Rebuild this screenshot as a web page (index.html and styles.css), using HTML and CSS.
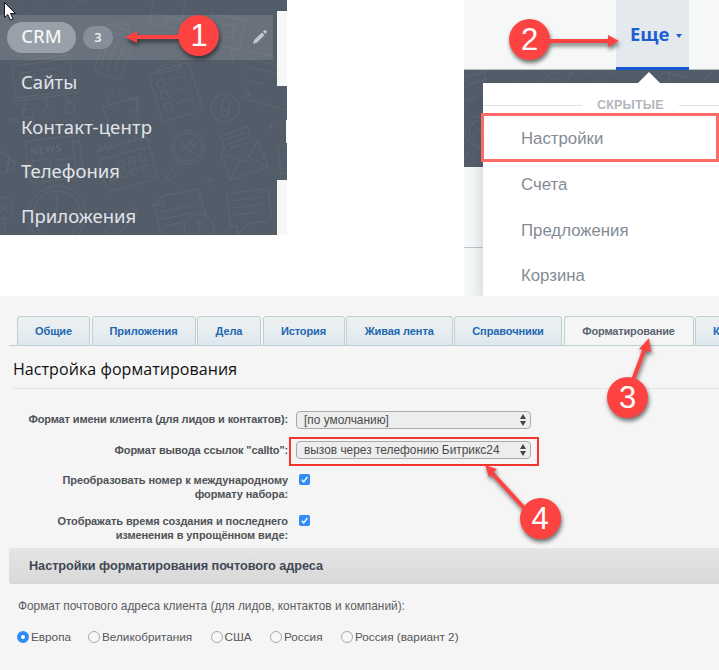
FILE: index.html
```html
<!DOCTYPE html>
<html lang="ru">
<head>
<meta charset="utf-8">
<title>Настройки CRM</title>
<link rel="stylesheet" href="styles.css">
</head>
<body>
<div class="page">
  <div class="top">
    <nav class="sidebar">
      <svg class="doodles" width="287" height="235" viewBox="0 0 287 235">
        <g transform="rotate(-8 45 80)"><rect x="14" y="62" width="58" height="32"/><path d="M10 58h66M10 97h66M24 97l-6 12M62 97l6 12M43 97v10M22 70h14v8H22zM42 70h20M42 76h14M22 86h40"/><circle cx="24" cy="111" r="5"/><circle cx="43" cy="111" r="4"/><circle cx="66" cy="111" r="5"/></g>
        <g transform="rotate(20 115 48)"><path d="M96 28h38M108 28v-6h14v6M100 34l3 42h26l3-42zM107 38l1 33M115 38v33M123 38l-1 33"/></g>
        <g transform="rotate(12 165 12)"><rect x="151" y="-22" width="32" height="48" rx="4"/><path d="M151 16h32"/><circle cx="167" cy="21" r="2"/></g>
        <g transform="rotate(12 222 38)"><path d="M204 16h40M207 16v30h34V16M214 24h18v12h-18zM215 46l-5 14M233 46l5 14"/></g>
        <path d="M68 -4l12 7 20-9M75 4l-8 9M19 7l9 8 17-12M103 107l7 20q10 4 28-3l-1-27zM130 99q10-2 8 7-2 6-8 6M110 102q-6-4-2-8M116 99q-6-4-2-8M122 97q-6-4-2-8"/>
        <g transform="rotate(-17 176 90)"><rect x="154" y="67" width="42" height="50" rx="4"/><path d="M165 70v-7h7q4-8 8 0h7v7zM160 76h7v7h-7zM160 88h7v7h-7zM160 100h7v7h-7zM172 79h18M172 91h18M172 103h18"/></g>
        <circle cx="225" cy="108" r="14"/><path d="M221 116l2-16 4-4 4 4-4 17zM221 111l8 1"/>
        <path d="M249 51l38 8M246 66l41 10M243 79l20 5M246 58l38 9M242 86l8 9-9 3 46 12M8 119l18 4"/>
        <g transform="rotate(-7 55 148)"><path d="M26 138h47v42H26zM73 144h7v32q-2 4-7 4M31 158h17v16H31zM53 160h15M53 166h15M53 172h15"/><text x="30" y="152">NEWS</text></g>
        <g transform="rotate(-15 127 164)"><path d="M101 143h52v43h-52zM101 153h52M105 139v7M111 139v7M117 139v7M123 139v7M129 139v7M135 139v7M141 139v7M147 139v7M118 159h6v6h-6zM129 159h6v6h-6zM140 159h6v6h-6zM107 170h6v6h-6zM118 170h6v6h-6zM129 170h6v6h-6zM140 170h6v6h-6z"/></g>
        <circle cx="188" cy="147" r="17"/><circle cx="188" cy="147" r="14"/><path d="M178 162l-12 16 4 2 13-15M181 142l13 12M185 138l13 12M181 152l13-14M185 156l13-14"/>
        <g transform="rotate(-20 242 154)"><path d="M222 147l20 15 20-15v28h-40zM222 147l6-4v-13h28v13l6 4M232 135h20M232 140h20M232 145h20M222 175l15-16M262 175l-15-16"/></g>
        <path d="M0 152l9 4-2 16-7 1M9 160q10 0 4 8-4 3-7 2M210 177v8M206 181h8M271 123v6M268 126h6"/>
        <circle cx="57" cy="215" r="29"/><circle cx="57" cy="215" r="24"/><path d="M57 195v19l13 5"/><circle cx="3" cy="208" r="11"/><path d="M-1 204l9 9M0 212l8-10M5 219v14"/>
        <path d="M105 235q0-10 10-15l15-12q9 0 6 8l-19 19M110 224l8 7"/>
        <path d="M162 235l-9-30 9-9 36-7 8 27M162 196l2 8-11 1M160 212l36-7M162 219l30-6M164 226l23-5"/>
        <circle cx="199" cy="229" r="15"/><path d="M199 235v-13M193 228l6-7 6 7"/>
        <path d="M226 194l38-5q4 0 5 4l2 24q0 4-4 4l-20 3-9 10-1-8-6 1zM232 201l30-4M233 208l30-4M234 215l24-3M278 147l9-2M278 147l3 27 6-1"/>
      </svg>
      <div class="crm-row">
        <span class="pill">CRM</span><span class="badge">3</span>
        <svg class="pencil" width="14" height="16" viewBox="0 0 14 16"><path d="M0 15l1.200-4 7.800-7.500 2.500 2.500L4 13.500zM10 2.500l1.500-1.500q2 0 2.500 1.500L12.500 5z"/></svg>
      </div>
      <a class="nav-item">Сайты</a>
      <a class="nav-item wide">Контакт-центр</a>
      <a class="nav-item">Телефония</a>
      <a class="nav-item">Приложения</a>
      <i class="edge edge-top"></i><i class="edge edge-mid"></i><i class="edge edge-low"></i>
    </nav>
    <section class="more">
      <header class="more-head"><a class="more-tab"><span>Еще</span><i></i></a></header>
      <div class="more-body">
        <div class="dark">
          <svg class="doodles" width="255" height="97" viewBox="0 0 255 97">
            <path d="M3 7l23-7M4 15l22-7M0 31l24-8-4-22M50 12l5 6M55 10l-4 9M76 14l15-15M84 8l11 2M102 13L110 0M120 0l16 13 14-13M190 10l12-8 22 6M205 0v14M240 10l10-9"/>
            <circle cx="16" cy="61" r="15"/><circle cx="16" cy="61" r="11"/><path d="M8 54l13 13M8 67l14-14M4 95l11-18M0 90l10-16M22 88l-7-4"/>
          </svg>
        </div>
        <div class="under"></div>
        <div class="menu">
          <div class="menu-title"><span>СКРЫТЫЕ</span></div>
          <a class="menu-item chosen">Настройки</a>
          <a class="menu-item">Счета</a>
          <a class="menu-item">Предложения</a>
          <a class="menu-item">Корзина</a>
        </div>
      </div>
    </section>
  </div>
  <main class="settings">
    <div class="tabs">
      <a class="tab t1">Общие</a><a class="tab t2">Приложения</a><a class="tab t3">Дела</a><a class="tab t4">История</a><a class="tab t5">Живая лента</a><a class="tab t6">Справочники</a><a class="tab t7 active">Форматирование</a><a class="tab t8">К</a>
    </div>
    <h1><span>Настройка форматирования</span></h1>
    <div class="form">
      <label class="tight">Формат имени клиента (для лидов и контактов):</label>
      <div class="select"><span>[по умолчанию]</span><svg width="6" height="12" viewBox="0 0 6 12"><path d="M0 5l3-5 3 5zM0 7h6l-3 5z"/></svg></div>
      <label class="tight">Формат вывода ссылок "callto":</label>
      <div class="select s2"><span>вызов через телефонию Битрикс24</span><svg width="6" height="12" viewBox="0 0 6 12"><path d="M0 5l3-5 3 5zM0 7h6l-3 5z"/></svg></div>
      <label>Преобразовать номер к международному<br>формату набора:</label>
      <svg class="check" width="11" height="11" viewBox="0 0 11 11"><rect width="11" height="11" rx="2"/><path d="M2.800 5.800l2 2.200 3.600-5.200"/></svg>
      <label>Отображать время создания и последнего<br>изменения в упрощённом виде:</label>
      <svg class="check" width="11" height="11" viewBox="0 0 11 11"><rect width="11" height="11" rx="2"/><path d="M2.800 5.800l2 2.200 3.600-5.200"/></svg>
    </div>
    <h2><span>Настройки форматирования почтового адреса</span></h2>
    <p><span>Формат почтового адреса клиента (для лидов, контактов и компаний):</span></p>
    <div class="radios">
      <label class="r1"><i class="on"></i><span>Европа</span></label>
      <label class="r2"><i></i><span>Великобритания</span></label>
      <label class="r3"><i></i><span>США</span></label>
      <label class="r4"><i></i><span>Россия</span></label>
      <label class="r5"><i></i><span>Россия (вариант 2)</span></label>
    </div>
  </main>
  <svg class="notes" width="719" height="670" viewBox="0 0 719 670">
    <rect class="frame" x="290" y="438" width="248" height="27"/>
    <g class="note">
      <path class="line" d="M180 37H135"/><path class="head" d="M125 37l12-6v12z"/><circle cx="198.500" cy="35.500" r="20.500"/>
      <path class="line" d="M548 41h62"/><path class="head" d="M619 41l-11-6v12z"/><circle cx="529.500" cy="39.500" r="20.500"/>
      <circle cx="627.500" cy="397.500" r="20.500"/><path class="line" d="M633 380l12-32"/><path class="head" d="M649 338l-10 11 12 3z"/>
      <path class="line" d="M524 508l-32-35"/><path class="head" d="M485 465l12 4-8 8z"/><circle cx="540.500" cy="518.500" r="20.500"/>
    </g>
    <g class="digits"><text x="199" y="46">1</text><text x="529.500" y="50">2</text><text x="627.500" y="408">3</text><text x="540" y="529">4</text></g>
    <path class="cursor" d="M4.500 2.500v15l3.300-3 2.500 5.500 2.700-1.200-2.500-5.300h5z"/>
  </svg>
</div>
</body>
</html>
```
FILE: styles.css
```css
* { box-sizing: border-box; }
body { margin: 0; background: #fff; font-family: "Liberation Sans", Arial, sans-serif; }
.page { position: relative; width: 719px; height: 670px; overflow: hidden; }
.top { display: flex; justify-content: space-between; height: 296px; }
.sidebar { position: relative; width: 287px; height: 235px; padding-top: 15px; background: #535c69; overflow: hidden; font-family: "Noto Sans", "Open Sans", sans-serif; color: #e1e4e8; }
.doodles { position: absolute; left: 0; top: 0; fill: none; stroke: #8d9b94; stroke-opacity: .19; stroke-width: 1; }
.doodles text { font: 10px "Noto Sans", sans-serif; stroke: none; fill: #8d9b94; fill-opacity: .3; letter-spacing: 1px; }
.crm-row { position: relative; display: flex; align-items: center; width: 273px; height: 45px; padding: 0 6px 1px 7px; background: rgba(255,255,255,.13); }
.pill { width: 69px; height: 31px; border-radius: 16px; background: #99a0a9; color: #f4f5f6; font-size: 18.500px; font-weight: 500; line-height: 28px; text-align: center; }
.badge { width: 30px; height: 23px; margin-left: 7px; border-radius: 12px; background: #878e99; color: #eceef0; font-size: 13px; font-weight: 600; line-height: 23px; text-align: center; }
.pencil { margin-left: auto; fill: #c3c8cd; }
.nav-item { position: relative; display: block; width: max-content; height: 44.700px; margin-left: 21px; font-size: 18.500px; line-height: 43px; }
.wide { letter-spacing: .15px; }
.edge { position: absolute; right: 0; width: 10px; background: #f6f8f8; }
.edge-top { top: 11px; height: 75px; }
.edge-mid { top: 120px; width: 1px; height: 23px; }
.edge-low { top: 180px; height: 55px; }
.more { width: 255px; height: 296px; }
.more-head { height: 70px; padding-left: 152px; background: #f6f8f8; border-bottom: 1px solid #b8bdc3; }
.more-tab { display: flex; align-items: center; width: 73px; height: 70px; padding-left: 14px; background: #e4e9ed; border-bottom: 3px solid #1459cf; color: #1c60cf; font: 700 18.500px/68px "Open Sans", sans-serif; }
.more-tab i { margin: 4px 0 0 6px; border: 3.500px solid transparent; border-top: 4px solid #1c60cf; border-bottom: 0; }
.more-body { position: relative; height: 226px; overflow: hidden; background: #f5f8f8; }
.dark { position: relative; height: 97px; background: #535c69; overflow: hidden; }
.under { height: 81px; border-bottom: 1px solid #b9c7cc; }
.menu { position: absolute; left: 19px; top: 13px; width: 236px; height: 213px; background: #fff; box-shadow: 0 8px 15px rgba(60,65,80,.24); }
.menu::before { content: ""; position: absolute; left: 155px; top: -11px; border: 11px solid transparent; border-top: 0; border-bottom-color: #fff; }
.menu-title { display: flex; align-items: center; gap: 15px; height: 30px; padding-top: 14px; color: #b2b7bd; font-size: 12.500px; font-weight: 700; letter-spacing: .2px; }
.menu-title::before { content: ""; width: 99px; height: 1px; background: #dfe1e3; }
.menu-title::after { content: ""; flex: 1; height: 1px; background: #dfe1e3; }
.menu-item { display: block; height: 45.500px; padding-left: 38px; color: #848b95; font-size: 16.800px; line-height: 47px; white-space: nowrap; }
.chosen { height: 49px; margin: 0 0 -1px -2px; padding-left: 37px; border: 3px solid #fd6b66; line-height: 45px; }
.settings { height: 374px; padding-top: 20px; background: #f5f5f5; overflow: hidden; }
.tabs { display: flex; gap: 1.500px; width: 710px; height: 30px; margin-left: 9px; padding-left: 8px; overflow: hidden; border-bottom: 1px solid #bdcfcf; }
.tab { flex: none; height: 30px; border: 1px solid #bdcfd0; border-radius: 3px 3px 0 0; background: linear-gradient(#edf0f1, #e8edf0 48%, #dce8ef); color: #2067b0; font-size: 11px; font-weight: 700; letter-spacing: -.1px; line-height: 29px; text-align: center; white-space: nowrap; }
.tab.active { background: #f5f5f5; color: #5c6470; border-bottom: 0; }
.t1 { width: 73px; }
.t2 { width: 104px; letter-spacing: -.03px; }
.t3 { width: 64px; }
.t4 { width: 82px; }
.t5 { width: 106.500px; }
.t6 { width: 108px; }
.t7 { width: 130px; letter-spacing: -.15px; }
.t8 { width: 60px; padding-left: 17px; text-align: left; }
h1 { height: 43px; margin: 0 0 0 13px; border-bottom: 1px solid #e4e4e4; color: #111; font: 400 16px/47px "Open Sans", sans-serif; letter-spacing: .06px; }
.form { display: grid; grid-template-columns: 288px 243px; grid-template-rows: 31px 30px 41px 41px; padding-top: 15px; height: 159px; }
.form label { padding-top: 8px; color: #4f5357; font-size: 11px; font-weight: 700; line-height: 14px; text-align: right; white-space: nowrap; letter-spacing: -.08px; }
.form .tight { letter-spacing: -.13px; }
.select { display: flex; align-items: center; justify-content: space-between; width: 235px; height: 18px; margin: 7px 0 0 8px; padding: 0 4px 1px 7px; border: 1px solid #a9a9a9; border-radius: 4px; background: #ededed; color: #4a4a4a; font-size: 11.900px; white-space: nowrap; }
.select svg { fill: #444; }
.s2 { margin-top: 6px; }
.check { margin: 9px 0 0 11px; fill: #2f8cf4; }
.check path { fill: none; stroke: #fff; stroke-width: 1.400; }
h2 { height: 36px; margin: 0 0 0 9px; padding-left: 20px; border-radius: 3px 0 0 3px; background: linear-gradient(#e5e5e6, #d8d8d8); color: #414854; font-size: 12.700px; letter-spacing: -.04px; line-height: 36px; }
p { height: 45px; margin: 0 0 0 18px; color: #5b5d61; font-size: 11.850px; line-height: 45px; }
.radios { display: flex; padding-left: 17px; color: #55575a; font-size: 11.750px; line-height: 16px; }
.radios label { display: flex; align-items: center; gap: 2px; white-space: nowrap; }
.radios i { flex: none; width: 12px; height: 12px; border: 1px solid #a8a8a8; border-radius: 50%; background: #f8f8f8; }
.radios i.on { border: 4px solid #2f8cf4; background: #fff; }
.r1 { width: 71px; }
.r2 { width: 122.500px; }
.r3 { width: 59.500px; }
.r4 { width: 71px; }
.notes { position: absolute; left: 0; top: 0; }
.frame { fill: none; stroke: #f2342f; stroke-width: 2; }
.note { fill: #fd4242; filter: drop-shadow(1px 3px 2px rgba(0,0,0,.55)); }
.line { stroke: #fd4242; stroke-width: 4; }
.digits { fill: #fff; font-size: 31px; text-anchor: middle; }
.cursor { fill: #fff; stroke: #151525; stroke-width: 1; }
```
